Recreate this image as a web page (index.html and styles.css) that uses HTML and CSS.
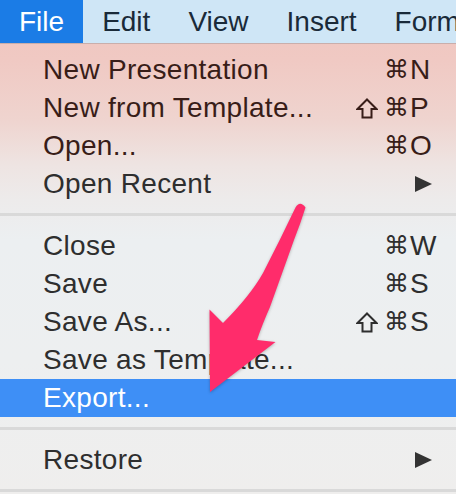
FILE: index.html
```html
<!DOCTYPE html>
<html>
<head>
<meta charset="utf-8">
<link rel="stylesheet" href="styles.css">
</head>
<body>
<div class="screen">
  <div class="menubar">
    <span class="mb-item active">File</span>
    <span class="mb-item">Edit</span>
    <span class="mb-item">View</span>
    <span class="mb-item">Insert</span>
    <span class="mb-item">Format</span>
  </div>
  <div class="menu">
    <div class="row warm"><span class="label">New Presentation</span><span class="mod">⌘</span><span class="key">N</span></div>
    <div class="row warm"><span class="label">New from Template...</span><span class="mod"><svg class="shift" width="22" height="21" viewBox="0 0 22 21"><path d="M11 1.5 L20.5 11 L15.5 11 L15.5 19.5 L6.5 19.5 L6.5 11 L1.5 11 Z"/></svg>⌘</span><span class="key">P</span></div>
    <div class="row warm"><span class="label">Open...</span><span class="mod">⌘</span><span class="key">O</span></div>
    <div class="row"><span class="label">Open Recent</span><span class="mod"></span><span class="key sub"><svg class="tri" width="17" height="16" viewBox="0 0 17 16"><polygon points="0,0 17,8 0,16"/></svg></span></div>
    <div class="sep"></div>
    <div class="row"><span class="label">Close</span><span class="mod">⌘</span><span class="key">W</span></div>
    <div class="row"><span class="label">Save</span><span class="mod">⌘</span><span class="key">S</span></div>
    <div class="row"><span class="label">Save As...</span><span class="mod"><svg class="shift" width="22" height="21" viewBox="0 0 22 21"><path d="M11 1.5 L20.5 11 L15.5 11 L15.5 19.5 L6.5 19.5 L6.5 11 L1.5 11 Z"/></svg>⌘</span><span class="key">S</span></div>
    <div class="row"><span class="label">Save as Template...</span><span class="mod"></span><span class="key"></span></div>
    <div class="row selected"><span class="label">Export...</span><span class="mod"></span><span class="key"></span></div>
    <div class="sep"></div>
    <div class="row"><span class="label">Restore</span><span class="mod"></span><span class="key sub"><svg class="tri" width="17" height="16" viewBox="0 0 17 16"><polygon points="0,0 17,8 0,16"/></svg></span></div>
    <div class="sep"></div>
  </div>
  <svg class="arrow" width="456" height="494" viewBox="0 0 456 494">
    <path d="M 295.5 207.5 Q 300 200 305.5 207.5 Q 300 225 294 240 Q 284 268 270 307 Q 262 325 257 340 L 275.5 342 L 210 392 L 209.5 309.5 L 223 323 Q 250 296 263 273 Q 280 240 295.5 207.5 Z"/>
  </svg>
</div>
</body>
</html>
```

FILE: styles.css
```css
html, body {
  margin: 0;
  padding: 0;
}
body {
  width: 456px;
  height: 494px;
  overflow: hidden;
  font-family: "Liberation Sans", "DejaVu Sans", Arial, sans-serif;
  font-size: 28px;
}
.screen {
  position: relative;
  width: 456px;
  height: 494px;
  overflow: hidden;
  background: linear-gradient(to bottom,
    #efc5be 0px, #f0c9c3 60px, #efd4cf 120px, #eee4e2 165px,
    #edebeb 200px, #eceff1 240px, #edeff0 360px, #efeeed 494px);
}
.menubar {
  display: flex;
  height: 43px;
  background: #cfe6f6;
  border-bottom: 1px solid #c9aeab;
  white-space: nowrap;
}
.mb-item {
  padding: 0 19px;
  line-height: 43px;
  color: #1a2a39;
}
.mb-item.active {
  background: #1b7ce6;
  color: #ffffff;
}
.menu {
  padding-top: 7px;
}
.row {
  display: grid;
  grid-template-columns: 1fr auto 22px;
  height: 38px;
  line-height: 38px;
  padding: 0 24px 0 43px;
  color: #2e2e2e;
  white-space: nowrap;
}
.label {
  letter-spacing: 0.3px;
}
.row.warm {
  color: #381d18;
}
.row.selected {
  background: #3e8ff6;
  color: #ffffff;
}
.mod {
  display: flex;
  align-items: center;
  justify-content: flex-end;
  padding-right: 1px;
  font-family: "DejaVu Sans", sans-serif;
  font-size: 25px;
}
.shift {
  display: block;
  margin-right: 6px;
  margin-top: 1px;
  fill: none;
  stroke: currentColor;
  stroke-width: 2;
  stroke-linejoin: miter;
}
.key {
  overflow: visible;
}
.key.sub {
  display: flex;
  justify-content: flex-end;
  align-items: center;
}
.tri {
  display: block;
  fill: #333333;
}
.sep {
  height: 24px;
  display: flex;
  flex-direction: column;
}
.sep::before {
  content: "";
  display: block;
  margin-top: 10px;
  height: 3px;
  background: #d9d9d9;
}
.arrow {
  position: absolute;
  left: 0;
  top: 0;
  pointer-events: none;
  fill: #ff2c6b;
  filter: drop-shadow(0 1px 1.5px rgba(0, 0, 0, 0.25));
}
```
